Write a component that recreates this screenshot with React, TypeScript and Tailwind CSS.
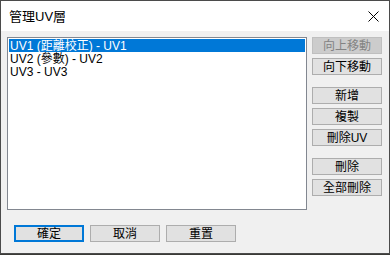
import React from "react";

const font = { fontFamily: '"Liberation Sans", "Noto Sans CJK TC", sans-serif' };

function Btn({ label, disabled, def, w = "w-[70px]" }: { label: string; disabled?: boolean; def?: boolean; w?: string }) {
  const base = `${w} h-[17px] flex items-center justify-center text-[12px] leading-none`;
  if (disabled)
    return <div className={`${base} bg-[#cccccc] border border-[#bfbfbf] text-[#838383]`}>{label}</div>;
  if (def)
    return <div className={`${base} bg-[#e1e1e1] border-2 border-[#0078d7] text-black`}>{label}</div>;
  return <div className={`${base} bg-[#e1e1e1] border border-[#adadad] text-black`}>{label}</div>;
}

export default function App() {
  const rows = ["UV1 (距離校正) - UV1", "UV2 (參數) - UV2", "UV3 - UV3"];
  return (
    <div className="w-[390px] h-[255px] bg-[#3a3a36]" style={font}>
      <div className="w-[390px] h-[254px] border border-[#4b4b4b] flex flex-col bg-[#f0f0f0]">
        <div className="h-[30px] bg-white flex items-center justify-between pl-[8px] pr-[10px] shrink-0">
          <span className="text-[13px] text-black leading-none">管理UV層</span>
          <svg width="11" height="11" viewBox="0 0 11 11">
            <path d="M0.5 0.5 L10.5 10.5 M10.5 0.5 L0.5 10.5" stroke="#000" strokeWidth="1" />
          </svg>
        </div>
        <div className="flex pl-[6px] pr-[7px] pt-[6px] gap-[5px]">
          <div className="w-[300px] h-[173px] bg-white border border-[#828790] p-[1px]">
            {rows.map((r, i) => (
              <div
                key={r}
                className={`h-[13px] flex items-center pl-[1px] text-[12px] leading-none ${i === 0 ? "bg-[#0078d7] text-white" : "text-black"}`}
              >
                {r}
              </div>
            ))}
          </div>
          <div className="flex flex-col">
            <div className="flex flex-col gap-[4px]">
              <Btn label="向上移動" disabled />
              <Btn label="向下移動" />
            </div>
            <div className="flex flex-col gap-[4px] mt-[12px]">
              <Btn label="新增" />
              <Btn label="複製" />
              <Btn label="刪除UV" />
            </div>
            <div className="flex flex-col gap-[4px] mt-[12px]">
              <Btn label="刪除" />
              <Btn label="全部刪除" />
            </div>
          </div>
        </div>
        <div className="flex gap-[6px] pl-[13px] mt-[15px]">
          <Btn label="確定" def />
          <Btn label="取消" />
          <Btn label="重置" />
        </div>
      </div>
    </div>
  );
}
